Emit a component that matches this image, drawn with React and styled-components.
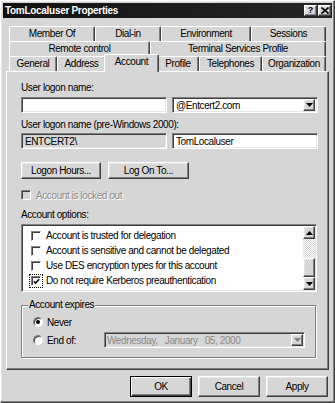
import React from "react";
import styled, { createGlobalStyle, css } from "styled-components";

const c = {
  face: "#d6d6d6",
  light: "#ffffff",
  hilite: "#e6e6e6",
  shadow: "#808080",
  dark: "#404040",
  text: "#000000",
  disabled: "#8c8c8c",
};

const raised = css`
  border: 1px solid;
  border-color: ${c.light} ${c.dark} ${c.dark} ${c.light};
  box-shadow: inset -1px -1px ${c.shadow}, inset 1px 1px ${c.hilite};
`;

const sunken = css`
  border: 1px solid;
  border-color: ${c.shadow} ${c.light} ${c.light} ${c.shadow};
  box-shadow: inset 1px 1px ${c.dark}, inset -1px -1px ${c.hilite};
`;

const GlobalStyle = createGlobalStyle`
  html, body {
    margin: 0;
    padding: 0;
    background: ${c.face};
  }
  body {
    font-family: "Liberation Sans", Arial, sans-serif;
    font-size: 10px;
    letter-spacing: -0.4px;
    color: ${c.text};
  }
  * { box-sizing: border-box; }
`;

const tabRows = [
  [
    { label: "Member Of", w: 86 },
    { label: "Dial-in", w: 66 },
    { label: "Environment", w: 90 },
    { label: "Sessions", w: 75 },
  ],
  [
    { label: "Remote control", w: 141 },
    { label: "Terminal Services Profile", w: 176 },
  ],
  [
    { label: "General", w: 48 },
    { label: "Address", w: 49 },
    { label: "Account", w: 51, active: true },
    { label: "Profile", w: 42 },
    { label: "Telephones", w: 63 },
    { label: "Organization", w: 64 },
  ],
];

const options = [
  { label: "Account is trusted for delegation" },
  { label: "Account is sensitive and cannot be delegated" },
  { label: "Use DES encryption types for this account" },
  { label: "Do not require Kerberos preauthentication", checked: true, focus: true },
];

const DownArrow = ({ color = "#000" }) => (
  <svg width="7" height="4" viewBox="0 0 7 4">
    <polygon points="0,0 7,0 3.5,4" fill={color} />
  </svg>
);

const UpArrow = () => (
  <svg width="7" height="4" viewBox="0 0 7 4">
    <polygon points="0,4 7,4 3.5,0" fill="#000" />
  </svg>
);

const CheckMark = () => (
  <svg width="8" height="7" viewBox="0 0 8 7">
    <path d="M1 3.2 L3 5.3 L7 1" stroke="#000" strokeWidth="1.7" fill="none" />
  </svg>
);

export default function App() {
  return (
    <>
      <GlobalStyle />
      <Window>
        <TitleBar>
          <TitleText>TomLocaluser Properties</TitleText>
          <CapButton>?</CapButton>
          <CapButton>
            <svg width="8" height="7" viewBox="0 0 8 7">
              <path d="M0.5 0.5 L7.5 6.5 M7.5 0.5 L0.5 6.5" stroke="#000" strokeWidth="1.6" />
            </svg>
          </CapButton>
        </TitleBar>

        <Body>
          <Tabs>
            {tabRows.map((row, i) => (
              <TabRow key={i}>
                {row.map(t => (
                  <Tab key={t.label} $w={t.w} $active={t.active}>
                    {t.label}
                  </Tab>
                ))}
              </TabRow>
            ))}
          </Tabs>

          <Panel>
            <Label>User logon name:</Label>
            <FieldRow $mt={3}>
              <TextBox />
              <TextBox>
                <span>@Entcert2.com</span>
                <DropButton>
                  <DownArrow />
                </DropButton>
              </TextBox>
            </FieldRow>

            <Label $mt={6}>User logon name (pre-Windows 2000):</Label>
            <FieldRow $mt={2}>
              <TextBox $disabled>ENTCERT2\</TextBox>
              <TextBox>TomLocaluser</TextBox>
            </FieldRow>

            <ButtonPair>
              <PushButton $w={80}>Logon Hours...</PushButton>
              <PushButton $w={81}>Log On To...</PushButton>
            </ButtonPair>

            <CheckRow $mt={10}>
              <CheckBox $disabled />
              <DisabledText>Account is locked out</DisabledText>
            </CheckRow>

            <Label $mt={8}>Account options:</Label>
            <ListBox>
              <ListItems>
                {options.map(o => (
                  <OptionRow key={o.label}>
                    <CheckBox $focus={o.focus}>{o.checked && <CheckMark />}</CheckBox>
                    <span>{o.label}</span>
                  </OptionRow>
                ))}
              </ListItems>
              <ScrollBar>
                <ScrollButton>
                  <UpArrow />
                </ScrollButton>
                <ScrollTrack />
                <ScrollThumb />
                <ScrollButton>
                  <DownArrow />
                </ScrollButton>
              </ScrollBar>
            </ListBox>

            <Group>
              <Legend>Account expires</Legend>
              <ExpiryGrid>
                <Radio $checked />
                <RadioLabel $span>Never</RadioLabel>
                <Radio />
                <RadioLabel>End of:</RadioLabel>
                <DateBox>
                  <DateText>{"Wednesday,   January   05, 2000"}</DateText>
                  <DropButton>
                    <DownArrow color={c.shadow} />
                  </DropButton>
                </DateBox>
              </ExpiryGrid>
            </Group>
          </Panel>

          <DialogButtons>
            <DialogButton $default>OK</DialogButton>
            <DialogButton>Cancel</DialogButton>
            <DialogButton>Apply</DialogButton>
          </DialogButtons>
        </Body>
      </Window>
    </>
  );
}

const Window = styled.div`
  width: 335px;
  height: 403px;
  background: ${c.face};
  ${raised};
  padding: 2px;
  display: flex;
  flex-direction: column;
`;

const TitleBar = styled.div`
  height: 15px;
  display: flex;
  align-items: center;
  padding-left: 2px;
  background: linear-gradient(to right, #121212, #262626);
  color: #fff;
  font-weight: bold;
  font-size: 10px;
  letter-spacing: -0.3px;
`;

const TitleText = styled.div`
  flex: 1;
  white-space: nowrap;
`;

const CapButton = styled.div`
  width: 13px;
  height: 11px;
  ${raised};
  background: ${c.face};
  color: #000;
  font-size: 9px;
  font-weight: bold;
  letter-spacing: 0;
  display: flex;
  align-items: center;
  justify-content: center;
  line-height: 1;
  margin-right: 1px;
`;

const Body = styled.div`
  flex: 1;
  display: flex;
  flex-direction: column;
  padding: 8px 3px 3px 3px;
`;

const Tabs = styled.div`
  margin: 0 3px;
  display: flex;
  flex-direction: column;
`;

const TabRow = styled.div`
  display: flex;
  height: 15px;
`;

const Tab = styled.div`
  width: ${p => p.$w}px;
  flex: none;
  height: ${p => (p.$active ? "18px" : "15px")};
  margin: ${p => (p.$active ? "-2px -2px -1px -2px" : "0")};
  ${p =>
    p.$active &&
    css`
      width: ${p.$w + 4}px;
      position: relative;
      z-index: 1;
    `}
  background: ${c.face};
  border-top: 1px solid ${c.light};
  border-left: 1px solid ${c.light};
  border-right: 1px solid ${c.dark};
  box-shadow: inset -1px 0 ${c.shadow};
  border-radius: 2px 2px 0 0;
  text-align: center;
  line-height: ${p => (p.$active ? "14px" : "13px")};
  white-space: nowrap;
`;

const Panel = styled.div`
  flex: 1;
  display: flex;
  flex-direction: column;
  background: ${c.face};
  border: 1px solid;
  border-color: ${c.light} ${c.dark} ${c.dark} ${c.light};
  box-shadow: inset -1px -1px ${c.shadow};
  padding: 10px 11px 0 14px;
`;

const Label = styled.div`
  height: 12px;
  line-height: 12px;
  margin-top: ${p => p.$mt || 0}px;
  white-space: nowrap;
`;

const FieldRow = styled.div`
  display: grid;
  grid-template-columns: 146px 146px;
  column-gap: 5px;
  margin-top: ${p => p.$mt || 0}px;
`;

const TextBox = styled.div`
  height: 16px;
  ${sunken};
  background: ${p => (p.$disabled ? c.face : "#fff")};
  display: flex;
  align-items: center;
  justify-content: space-between;
  padding: 0 2px 0 3px;
  white-space: nowrap;
`;

const DropButton = styled.div`
  width: 12px;
  height: 12px;
  ${raised};
  background: ${c.face};
  display: flex;
  align-items: center;
  justify-content: center;
  flex: none;
`;

const ButtonPair = styled.div`
  display: flex;
  gap: 7px;
  margin-top: 13px;
`;

const PushButton = styled.div`
  width: ${p => p.$w}px;
  height: 17px;
  ${raised};
  background: ${c.face};
  display: flex;
  align-items: center;
  justify-content: center;
  white-space: nowrap;
`;

const CheckRow = styled.div`
  height: 12px;
  display: flex;
  align-items: center;
  gap: 5px;
  margin-top: ${p => p.$mt || 0}px;
`;

const CheckBox = styled.span`
  width: 10px;
  height: 10px;
  flex: none;
  border: 1px solid;
  border-color: ${c.shadow} ${c.light} ${c.light} ${c.shadow};
  box-shadow: inset 1px 1px ${c.dark};
  background: ${p => (p.$disabled ? c.face : "#fff")};
  display: flex;
  align-items: center;
  justify-content: center;
  padding-left: 1px;
  padding-top: 1px;
  outline: ${p => (p.$focus ? "1px dotted #000" : "none")};
  outline-offset: 1px;
`;

const DisabledText = styled.span`
  color: ${c.disabled};
  text-shadow: 1px 1px 0 #fff;
  white-space: nowrap;
`;

const ListBox = styled.div`
  margin-top: 3px;
  height: 68px;
  ${sunken};
  background: #fff;
  padding: 1px;
  display: flex;
`;

const ListItems = styled.div`
  flex: 1;
  padding-top: 2px;
`;

const OptionRow = styled.div`
  height: 15px;
  display: flex;
  align-items: center;
  gap: 5px;
  padding-left: 8px;
  white-space: nowrap;
`;

const ScrollBar = styled.div`
  width: 12px;
  display: flex;
  flex-direction: column;
`;

const ScrollButton = styled.div`
  height: 13px;
  ${raised};
  background: ${c.face};
  display: flex;
  align-items: center;
  justify-content: center;
`;

const ScrollTrack = styled.div`
  flex: 1;
  background-image: conic-gradient(#fff 25%, ${c.face} 0 50%, #fff 0 75%, ${c.face} 0);
  background-size: 2px 2px;
`;

const ScrollThumb = styled.div`
  height: 19px;
  ${raised};
  background: ${c.face};
`;

const Group = styled.fieldset`
  margin: 7px 1px 0 0;
  padding: 5px 0 9px 6px;
  border: 1px solid ${c.shadow};
  box-shadow: inset 1px 1px #fff, 1px 1px #fff;
  min-width: 0;
`;

const Legend = styled.legend`
  padding: 0 1px;
  line-height: 12px;
  background: ${c.face};
`;

const ExpiryGrid = styled.div`
  display: grid;
  grid-template-columns: 10px 53px 201px;
  grid-template-rows: 12px 16px;
  column-gap: 4px;
  row-gap: 4px;
  align-items: center;
  padding-left: 5px;
`;

const Radio = styled.span`
  width: 10px;
  height: 10px;
  border-radius: 50%;
  border: 1px solid;
  border-color: ${c.shadow} ${c.light} ${c.light} ${c.shadow};
  box-shadow: inset 1px 1px ${c.dark};
  background: #fff;
  display: flex;
  align-items: center;
  justify-content: center;

  &::after {
    content: "";
    width: 4px;
    height: 4px;
    border-radius: 50%;
    background: #000;
    display: ${p => (p.$checked ? "block" : "none")};
  }
`;

const RadioLabel = styled.span`
  grid-column: ${p => (p.$span ? "2 / 4" : "auto")};
  white-space: nowrap;
`;

const DateBox = styled.div`
  height: 16px;
  ${sunken};
  background: ${c.face};
  display: flex;
  align-items: center;
  justify-content: space-between;
  padding: 0 1px 0 2px;
`;

const DateText = styled.span`
  color: ${c.disabled};
  white-space: pre;
`;

const DialogButtons = styled.div`
  display: flex;
  justify-content: flex-end;
  gap: 6px;
  margin-top: 6px;
  margin-right: 1px;
`;

const DialogButton = styled.div`
  width: 62px;
  height: 21px;
  background: ${c.face};
  display: flex;
  align-items: center;
  justify-content: center;
  ${p =>
    p.$default
      ? css`
          border: 1px solid #000;
          box-shadow: inset 1px 1px #fff, inset -1px -1px ${c.dark}, inset -2px -2px ${c.shadow};
        `
      : raised};
`;
